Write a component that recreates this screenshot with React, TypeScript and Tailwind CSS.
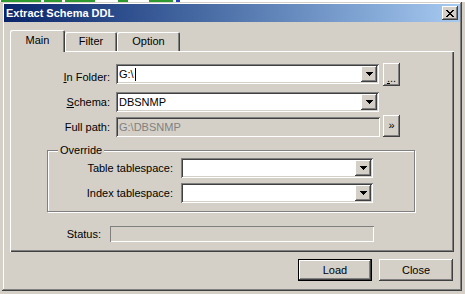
import React from "react";

const FONT = { fontFamily: '"Liberation Sans", Arial, sans-serif' };

const RAISED =
  "bg-[#d4d0c8] shadow-[inset_-1px_-1px_#404040,inset_1px_1px_#ffffff,inset_-2px_-2px_#808080,inset_2px_2px_#d4d0c8]";
const SUNKEN =
  "shadow-[inset_1px_1px_#808080,inset_-1px_-1px_#ffffff,inset_2px_2px_#404040,inset_-2px_-2px_#d4d0c8]";

const X_ROWS = ["##....##", ".##..##.", "..####..", "...##...", "..####..", ".##..##.", "##....##"];

function CloseGlyph() {
  return (
    <svg width="8" height="7" viewBox="0 0 8 7" shapeRendering="crispEdges">
      {X_ROWS.map((row, y) =>
        row.split("").map((c, x) => (c === "#" ? <rect key={`${x}-${y}`} x={x} y={y} width="1" height="1" fill="#000" /> : null))
      )}
    </svg>
  );
}

function Arrow() {
  return (
    <svg width="7" height="4" viewBox="0 0 7 4" shapeRendering="crispEdges">
      <rect x="0" y="0" width="7" height="1" fill="#000" />
      <rect x="1" y="1" width="5" height="1" fill="#000" />
      <rect x="2" y="2" width="3" height="1" fill="#000" />
      <rect x="3" y="3" width="1" height="1" fill="#000" />
    </svg>
  );
}

// combo box with the dropdown button on the right
function Combo({ className, value, caret }: { className: string; value?: string; caret?: boolean }) {
  return (
    <div className={`flex h-[20px] bg-white p-[2px] ${SUNKEN} ${className}`}>
      <div className="flex flex-1 items-center pl-[1px] text-[11px] leading-none text-black">
        {value}
        {caret && <span className="ml-[1px] inline-block h-[13px] w-[1px] bg-black" />}
      </div>
      <div className={`flex w-[16px] items-center justify-center ${RAISED}`}>
        <Arrow />
      </div>
    </div>
  );
}

function Label({ className, children }: { className: string; children: React.ReactNode }) {
  return <div className={`text-right text-[11px] leading-none text-black ${className}`}>{children}</div>;
}

export default function App() {
  return (
    <div className="h-[294px] w-[465px] overflow-hidden bg-[#d4d0c8]" style={FONT}>
      <div className="flex h-[2px] items-start gap-[3px] bg-white pl-[1px]">
        <span className="h-[2px] w-[40px] bg-[#2f9a2f]" />
        <span className="h-[2px] w-[18px] bg-[#2f9a2f]" />
        <span className="h-[2px] w-[30px] bg-[#2f9a2f]" />
        <span className="ml-[20px] h-[2px] w-[10px] bg-[#2f9a2f]" />
        <span className="ml-[18px] h-[2px] w-[24px] bg-[#2f9a2f]" />
        <span className="h-[2px] w-[4px] bg-[#2040c0]" />
      </div>
      <div className="ml-[2px] flex h-[289px] w-[460px] flex-col bg-[#d4d0c8] p-[2px] shadow-[inset_-1px_-1px_#404040,inset_1px_1px_#d4d0c8,inset_-2px_-2px_#808080,inset_2px_2px_#ffffff]">
        {/* title bar */}
        <div className="flex h-[18px] items-center justify-between bg-linear-to-r from-[#0a246a] to-[#a6caf0] pl-[2px] pr-[2px]">
          <span className="text-[11px] font-bold leading-none text-white">Extract Schema DDL</span>
          <button className={`flex h-[14px] w-[16px] items-center justify-center ${RAISED}`}>
            <CloseGlyph />
          </button>
        </div>

        <div className="flex flex-1 flex-col px-[6px]">
          {/* tabs */}
          <div className="mt-[8px] flex h-[21px] items-end">
            <div className="relative z-10 mb-[-1px] flex h-[22px] w-[55px] items-center justify-center rounded-t-[2px] bg-[#d4d0c8] pb-[1px] text-[11px] leading-none text-black shadow-[inset_1px_1px_#ffffff,inset_-1px_0_#404040,inset_-2px_0_#808080]">
              Main
            </div>
            <div className="flex h-[19px] w-[52px] items-center justify-center rounded-t-[2px] text-[11px] leading-none text-black shadow-[inset_1px_1px_#ffffff,inset_-1px_0_#404040,inset_-2px_0_#808080]">
              Filter
            </div>
            <div className="flex h-[19px] w-[63px] items-center justify-center rounded-t-[2px] text-[11px] leading-none text-black shadow-[inset_1px_1px_#ffffff,inset_-1px_0_#404040,inset_-2px_0_#808080]">
              Option
            </div>
          </div>

          {/* tab panel */}
          <div className="flex h-[201px] flex-col pl-[1px] pt-[1px] shadow-[inset_1px_1px_#ffffff,inset_-1px_-1px_#404040,inset_-2px_-2px_#808080]">
            <div className="mt-[11px] flex h-[23px] items-start">
              <Label className="mt-[9px] w-[99px]">
                <span className="underline">I</span>n Folder:
              </Label>
              <Combo className="ml-[6px] mt-[1px] w-[263px]" value="G:\" caret />
              <button className={`ml-[4px] flex h-[23px] w-[17px] items-start justify-center pt-[10px] text-[11px] leading-none text-black ${RAISED}`}>
                <span className="underline">.</span>..
              </button>
            </div>

            <div className="mt-[6px] flex h-[20px] items-center">
              <Label className="w-[99px]">
                <span className="underline">S</span>chema:
              </Label>
              <Combo className="ml-[6px] w-[263px]" value="DBSNMP" />
            </div>

            <div className="mt-[3px] flex h-[22px] items-start">
              <Label className="mt-[7px] w-[99px]">Full path:</Label>
              <div className={`ml-[6px] mt-[2px] flex h-[20px] w-[264px] items-center bg-[#d4d0c8] pl-[3px] text-[11px] leading-none text-[#808080] ${SUNKEN}`}>
                G:\DBSNMP
              </div>
              <button className={`ml-[3px] flex h-[22px] w-[17px] items-center justify-center pb-[1px] text-[11px] leading-none text-black ${RAISED}`}>
                »
              </button>
            </div>

            {/* override group */}
            <div className="relative ml-[36px] mt-[13px] flex h-[62px] w-[368px] flex-col border border-[#808080] pt-[7px] shadow-[inset_1px_1px_#ffffff,1px_1px_#ffffff]">
              <span className="absolute left-[10px] top-[-7px] bg-[#d4d0c8] px-[2px] text-[11px] leading-[13px] text-black">
                Override
              </span>
              <div className="flex h-[20px] items-center">
                <Label className="w-[125px]">Table tablespace:</Label>
                <Combo className="ml-[8px] w-[192px]" />
              </div>
              <div className="mt-[5px] flex h-[20px] items-center">
                <Label className="w-[125px]">Index tablespace:</Label>
                <Combo className="ml-[8px] w-[192px]" />
              </div>
            </div>

            <div className="mt-[14px] flex h-[16px] items-center">
              <Label className="w-[90px]">Status:</Label>
              <div className="ml-[9px] h-[16px] w-[264px] shadow-[inset_1px_1px_#808080,inset_-1px_-1px_#ffffff]" />
            </div>
          </div>

          {/* buttons */}
          <div className="mr-[1px] mt-[7px] flex justify-end gap-[7px]">
            <button className="h-[22px] w-[74px] border border-black">
              <div className={`flex h-full w-full items-center justify-center text-[11px] leading-none text-black ${RAISED}`}>
                Load
              </div>
            </button>
            <button className={`flex h-[22px] w-[74px] items-center justify-center text-[11px] leading-none text-black ${RAISED}`}>
              Close
            </button>
          </div>
        </div>
      </div>
    </div>
  );
}
